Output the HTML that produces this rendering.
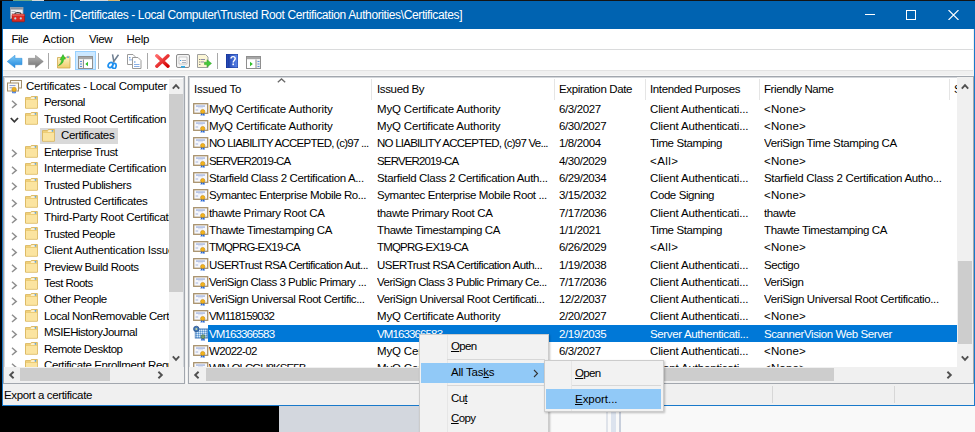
<!DOCTYPE html>
<html><head><meta charset="utf-8">
<style>
*{margin:0;padding:0;box-sizing:border-box}
html,body{width:975px;height:432px;overflow:hidden;background:#000}
body{position:relative;font-family:"Liberation Sans",sans-serif;font-size:11.5px;letter-spacing:-0.3px;color:#000}
.a{position:absolute}
.t{position:absolute;white-space:nowrap;line-height:14px}
.ic{position:absolute;display:block}
.pane{position:absolute;background:#fff;border:1px solid #a2a7ae;box-shadow:inset 0 0 0 1px #d3d6da;overflow:hidden}
.sb{position:absolute;background:#f0f0f0}
.th{position:absolute;background:#cdcdcd}
.arr{position:absolute;width:17px;height:17px}
.u{text-decoration:underline;text-underline-offset:1px}
</style></head><body>

<div class="a" style="left:0;top:0;width:975px;height:1px;background:#141414"></div>
<div class="a" style="left:13px;top:0;width:19px;height:1px;background:#6aa88a"></div>
<div class="a" style="left:32px;top:0;width:12px;height:1px;background:#d8d8d8"></div>
<div class="a" style="left:80px;top:0;width:28px;height:1px;background:#d8d8d8"></div>
<div class="a" style="left:108px;top:0;width:12px;height:1px;background:#d6b36a"></div>
<div class="a" style="left:279px;top:405px;width:140px;height:27px;background:#d3d7de"></div>
<div class="a" style="left:419px;top:405px;width:556px;height:27px;background:#f9f9f9"></div>
<div class="a" style="left:606px;top:405px;width:2px;height:27px;background:#dfe3ea"></div>
<div class="a" style="left:611px;top:405px;width:5px;height:27px;background:#dce3ee"></div>
<div class="a" style="left:619px;top:405px;width:2px;height:27px;background:#c8cfdc"></div>
<div class="a" style="left:2px;top:1px;width:973px;height:405px;background:#f0f0f0;border:1px solid #1979ca;border-top:0"></div>
<div class="a" style="left:2px;top:1px;width:973px;height:28px;background:#0063b1"></div>
<div class="a" style="left:3px;top:29px;width:970px;height:20px;background:#fff"></div>
<div class="a" style="left:3px;top:49px;width:970px;height:1px;background:#dadbdc"></div>
<div class="a" style="left:3px;top:50px;width:970px;height:20px;background:#fff"></div>
<div class="a" style="left:3px;top:70px;width:970px;height:1px;background:#e3e3e3"></div>
<div class="a" style="left:3px;top:75px;width:970px;height:1px;background:#f9f9f9"></div>
<div class="a" style="left:186px;top:75px;width:1px;height:309px;background:#f9f9f9"></div>
<svg class="ic" style="left:10px;top:7px" width="16" height="16" viewBox="0 0 16 16"><rect x="0.5" y="0.5" width="12.5" height="11" fill="#eef0f3" stroke="#9aa0a8" stroke-width="0.8"/><rect x="0.8" y="0.8" width="12" height="1.8" fill="#8c939c"/><rect x="1.5" y="4" width="4" height="0.8" fill="#9aa3ad"/><rect x="1.5" y="6" width="2" height="0.8" fill="#b0b8c0"/><path d="M4.8 7.3c0-2.2 6.2-2.2 6.2 0" fill="none" stroke="#3a3a3a" stroke-width="1.1"/><rect x="2" y="7.2" width="12.6" height="7.6" rx="0.8" fill="#d92a22" stroke="#a0140e" stroke-width="0.6"/><rect x="2.3" y="7.5" width="12" height="1.2" fill="#ee6a60"/><circle cx="5.3" cy="11.4" r="1.1" fill="#bcd8e0"/><circle cx="10.8" cy="11.4" r="1.1" fill="#bcd8e0"/></svg>
<div class="t" style="left:30px;top:8px;color:#fff;font-size:12px;letter-spacing:-0.38px">certlm - [Certificates - Local Computer\Trusted Root Certification Authorities\Certificates]</div>
<div class="a" style="left:865px;top:14px;width:10px;height:1px;background:#fff"></div>
<div class="a" style="left:906px;top:10px;width:10px;height:10px;border:1px solid #fff"></div>
<svg class="ic" style="left:948px;top:10px" width="11" height="10" viewBox="0 0 11 10"><path d="M0.5 0L10.5 10M10.5 0L0.5 10" stroke="#fff" stroke-width="1.1"/></svg>
<div class="t" style="left:11.5px;top:32px;letter-spacing:-0.483px">File</div>
<div class="t" style="left:42.8px;top:32px;letter-spacing:-0.078px">Action</div>
<div class="t" style="left:89px;top:32px;letter-spacing:-0.380px">View</div>
<div class="t" style="left:126.5px;top:32px;letter-spacing:-0.214px">Help</div>
<svg class="ic" style="left:0;top:0;width:0;height:0"><defs><linearGradient id="gb" x1="0" y1="0" x2="0" y2="1"><stop offset="0" stop-color="#7dcaf7"/><stop offset="1" stop-color="#1f86dc"/></linearGradient><linearGradient id="gg" x1="0" y1="0" x2="0" y2="1"><stop offset="0" stop-color="#b9b9b9"/><stop offset="1" stop-color="#6f6f6f"/></linearGradient><linearGradient id="gf" x1="0" y1="0" x2="0" y2="1"><stop offset="0" stop-color="#fdf0c0"/><stop offset="1" stop-color="#f0cd6a"/></linearGradient><linearGradient id="gr" x1="0" y1="0" x2="1" y2="1"><stop offset="0" stop-color="#ff6a6a"/><stop offset="1" stop-color="#d40000"/></linearGradient><linearGradient id="gh" x1="0" y1="0" x2="1" y2="0"><stop offset="0" stop-color="#1c3fae"/><stop offset="1" stop-color="#5b86ea"/></linearGradient></defs></svg>
<svg class="ic" style="left:7px;top:55px" width="16" height="14" viewBox="0 0 16 14"><path d="M0.2 6.5L8 0.2V3.3H15V9.7H8V12.8z" fill="url(#gb)" stroke="#2a8ad8" stroke-width="0.5"/></svg>
<svg class="ic" style="left:28px;top:55px" width="16" height="14" viewBox="0 0 16 14"><path d="M15.3 6.5L7.5 0.2V3.3H0.5V9.7H7.5V12.8z" fill="url(#gg)" stroke="#7a7a7a" stroke-width="0.5"/></svg>
<div class="a" style="left:48px;top:53px;width:1px;height:16px;background:#a8a8a8"></div>
<svg class="ic" style="left:57px;top:54px" width="14" height="15" viewBox="0 0 14 15"><path d="M0.5 3.5h12.5v10.5h-12.5z" rx="1" fill="url(#gf)" stroke="#cfa84e" stroke-width="0.8"/><path d="M9 3.5l1-1.2h2.5l0.5 1.2" fill="#fff6d8" stroke="#cfa84e" stroke-width="0.6"/><circle cx="11" cy="3.2" r="0.9" fill="#5aa6e6"/><path d="M1.5 11.5C3.5 10 4.5 8 4.8 5.5L3 5.8 6 0.6 8.5 5 6.6 5.2C6.4 8.3 5 10.5 1.5 11.5z" fill="#3fcf2f" stroke="#1f9a1a" stroke-width="0.5"/></svg>
<div class="a" style="left:75px;top:51px;width:21px;height:19px;background:#cce8ff;border:1px solid #99d1ff"></div>
<svg class="ic" style="left:78px;top:56px" width="15" height="13" viewBox="0 0 15 13"><rect x="0.5" y="0.5" width="14" height="12" fill="#ececec" stroke="#8f8f8f"/><rect x="1" y="1" width="13" height="2" fill="#a6a6a6"/><rect x="6" y="4" width="8" height="8" fill="#fff"/><rect x="5" y="3.5" width="1" height="9" fill="#8f8f8f"/><path d="M10 5.8v4.4L7.3 8z" fill="#2fbf2a"/><rect x="2" y="5" width="2" height="1" fill="#5b8ed8"/><rect x="2" y="7.5" width="2" height="1" fill="#5b8ed8"/><rect x="2" y="10" width="2" height="1" fill="#5b8ed8"/></svg>
<div class="a" style="left:98px;top:53px;width:1px;height:16px;background:#a8a8a8"></div>
<svg class="ic" style="left:107px;top:54px" width="13" height="15" viewBox="0 0 13 15"><path d="M5.5 0.3L7 8.5M11.5 0.8L6 8.5" stroke="#6e7e90" stroke-width="1.5"/><ellipse cx="3.5" cy="11" rx="2" ry="2.8" transform="rotate(35 3.5 11)" fill="none" stroke="#1e90f0" stroke-width="1.7"/><ellipse cx="7.3" cy="12" rx="1.8" ry="2.6" transform="rotate(10 7.3 12)" fill="none" stroke="#1e90f0" stroke-width="1.7"/></svg>
<svg class="ic" style="left:127px;top:54px" width="15" height="15" viewBox="0 0 15 15"><path d="M0.5 0.5h5.5l2 2v8h-7.5z" fill="#fff" stroke="#9a9a9a"/><path d="M5.5 3.5h5.5l3 3v8h-8.5z" fill="#fff" stroke="#9a9a9a"/><rect x="2" y="3.2" width="1.5" height="1" fill="#4a86d8"/><rect x="2" y="5.5" width="3" height="0.8" fill="#6a9ae0"/><rect x="7" y="7.5" width="1.5" height="1" fill="#4a86d8"/><rect x="7" y="10" width="5.5" height="0.8" fill="#6a9ae0"/><rect x="7" y="12" width="5.5" height="0.8" fill="#6a9ae0"/></svg>
<div class="a" style="left:147px;top:53px;width:1px;height:16px;background:#a8a8a8"></div>
<svg class="ic" style="left:155px;top:54px" width="15" height="14" viewBox="0 0 15 14"><path d="M1.8 1.8L13 12.2M13 1.8L1.8 12.2" stroke="url(#gr)" stroke-width="3.4" stroke-linecap="round"/></svg>
<svg class="ic" style="left:176px;top:54px" width="14" height="14" viewBox="0 0 14 14"><rect x="0.5" y="0.5" width="13" height="13" rx="1.5" fill="#f3f3f3" stroke="#8c8c8c"/><path d="M3 3h8v7h-8z" fill="#fafafa" stroke="#b0b0b0" stroke-width="0.6"/><rect x="4" y="6" width="1.2" height="1" fill="#3aa0e8"/><rect x="6" y="6" width="4" height="0.8" fill="#9aa0b0"/><rect x="6" y="8" width="4" height="0.8" fill="#9aa0b0"/><rect x="5" y="12" width="4" height="1.6" fill="#2aaae8"/></svg>
<svg class="ic" style="left:197px;top:54px" width="15" height="14" viewBox="0 0 15 14"><path d="M0.5 0.5h8l2.5 2.5v10.5h-10.5z" fill="#fcf6d6" stroke="#a0a0a0"/><rect x="2.3" y="5" width="1" height="1" fill="#555"/><rect x="4" y="5" width="4" height="0.9" fill="#8080a0"/><rect x="2.3" y="7.5" width="1" height="1" fill="#555"/><rect x="4" y="7.5" width="3" height="0.9" fill="#8080a0"/><rect x="2.3" y="10" width="1" height="1" fill="#555"/><path d="M7.5 8.2h2.5v-2.5l4.5 3.7-4.5 3.7v-2.5h-2.5z" fill="#45c83a" stroke="#2a9a22" stroke-width="0.5"/></svg>
<div class="a" style="left:217px;top:53px;width:1px;height:16px;background:#a8a8a8"></div>
<svg class="ic" style="left:226px;top:54px" width="12" height="14" viewBox="0 0 12 14"><rect x="0" y="0" width="12" height="14" fill="url(#gh)"/><rect x="0" y="0" width="12" height="14" fill="none" stroke="#132e8a" stroke-width="0.8"/><rect x="2.5" y="0.5" width="0.8" height="13" fill="#1a3490"/><path d="M5 4.6c0-2.6 4.2-2.6 4.2 0 0 1.8-2 1.8-2 3.8" fill="none" stroke="#fff" stroke-width="1.4"/><rect x="6.4" y="9.5" width="1.6" height="1.7" fill="#fff"/></svg>
<svg class="ic" style="left:246px;top:56px" width="15" height="13" viewBox="0 0 15 13"><rect x="0.5" y="0.5" width="14" height="12" fill="#ececec" stroke="#8f8f8f"/><rect x="1" y="1" width="13" height="2" fill="#a6a6a6"/><rect x="1" y="4" width="8.5" height="8" fill="#fff"/><rect x="9.5" y="3.5" width="1" height="9" fill="#8f8f8f"/><path d="M4 5.8v4.4L6.8 8z" fill="#2fbf2a"/><rect x="11.5" y="5" width="2" height="1" fill="#5b8ed8"/><rect x="11.5" y="7.5" width="2" height="1" fill="#5b8ed8"/><rect x="11.5" y="10" width="2" height="1" fill="#5b8ed8"/></svg>
<div class="pane" style="left:3px;top:76px;width:182px;height:308px">
<div class="a" style="left:3px;top:3px"><svg class="ic" width="16" height="15" viewBox="0 0 16 15"><rect x="3.5" y="0.5" width="11" height="7.5" fill="#fbfaf6" stroke="#a38f6d"/><rect x="0.5" y="3" width="11" height="8" fill="#fbfaf6" stroke="#a38f6d"/><rect x="2.5" y="5" width="6" height="1" fill="#8ea3d6"/><rect x="2.5" y="7" width="3" height="1.3" fill="#a9b6dc"/><path d="M5.5 10.5l-0.5 3 1.2-0.8 0.8 1.2 0.4-3.2z M8.5 10.5l0.5 3-1.2-0.8-0.8 1.2-0.4-3.2z" fill="#2f6fe0"/><circle cx="7.1" cy="9.4" r="2.2" fill="#eab11e" stroke="#c98a10" stroke-width="0.6"/></svg></div>
<div class="t" style="left:22px;top:2px;letter-spacing:-0.270px">Certificates - Local Computer</div>
<svg class="ic" style="left:7.30px;top:23.20px" width="7" height="9" viewBox="0 0 7 9"><path d="M1 0.8L5.2 4.4 1 8" fill="none" stroke="#8f8f8f" stroke-width="1.5"/></svg>
<div class="a" style="left:21.30px;top:19.00px"><svg class="ic" width="13" height="13" viewBox="0 0 13 13"><path d="M0.5 1.6H5.3L6.3 0.5H12.4V12.2H0.5Z" fill="#f3d47c" stroke="#d9b55c" stroke-width="0.9"/><path d="M6.6 1.2h3.6v1.5h-4.6z" fill="#fff8e6"/><circle cx="10.4" cy="1.8" r="0.9" fill="#5ba3dc"/><rect x="1" y="3.2" width="11" height="8.6" fill="#fbe4a0"/><rect x="1" y="3" width="11" height="0.7" fill="#e8c468"/></svg></div>
<div class="t" style="left:40px;top:18.42px;width:125px;overflow:hidden;letter-spacing:-0.574px">Personal</div>
<svg class="ic" style="left:5.60px;top:39.82px" width="9" height="7" viewBox="0 0 9 7"><path d="M0.8 1L4.4 4.8 8 1" fill="none" stroke="#383838" stroke-width="1.8"/></svg>
<div class="a" style="left:21.30px;top:35.42px"><svg class="ic" width="13" height="13" viewBox="0 0 13 13"><path d="M0.5 1.6H5.3L6.3 0.5H12.4V12.2H0.5Z" fill="#f3d47c" stroke="#d9b55c" stroke-width="0.9"/><path d="M6.6 1.2h3.6v1.5h-4.6z" fill="#fff8e6"/><circle cx="10.4" cy="1.8" r="0.9" fill="#5ba3dc"/><rect x="1" y="3.2" width="11" height="8.6" fill="#fbe4a0"/><rect x="1" y="3" width="11" height="0.7" fill="#e8c468"/></svg></div>
<div class="t" style="left:40px;top:34.84px;width:125px;overflow:hidden;letter-spacing:-0.299px">Trusted Root Certification</div>
<div class="a" style="left:36px;top:50.50px;width:78px;height:16.4px;background:#d9d9d9"></div>
<div class="a" style="left:37.70px;top:51.84px"><svg class="ic" width="13" height="13" viewBox="0 0 13 13"><path d="M0.5 1.6H5.3L6.3 0.5H12.4V12.2H0.5Z" fill="#f3d47c" stroke="#d9b55c" stroke-width="0.9"/><path d="M6.6 1.2h3.6v1.5h-4.6z" fill="#fff8e6"/><circle cx="10.4" cy="1.8" r="0.9" fill="#5ba3dc"/><rect x="1" y="3.2" width="11" height="8.6" fill="#fbe4a0"/><rect x="1" y="3" width="11" height="0.7" fill="#e8c468"/></svg></div>
<div class="t" style="left:57px;top:51.26px;width:108px;overflow:hidden;letter-spacing:-0.353px">Certificates</div>
<svg class="ic" style="left:7.30px;top:72.46px" width="7" height="9" viewBox="0 0 7 9"><path d="M1 0.8L5.2 4.4 1 8" fill="none" stroke="#8f8f8f" stroke-width="1.5"/></svg>
<div class="a" style="left:21.30px;top:68.26px"><svg class="ic" width="13" height="13" viewBox="0 0 13 13"><path d="M0.5 1.6H5.3L6.3 0.5H12.4V12.2H0.5Z" fill="#f3d47c" stroke="#d9b55c" stroke-width="0.9"/><path d="M6.6 1.2h3.6v1.5h-4.6z" fill="#fff8e6"/><circle cx="10.4" cy="1.8" r="0.9" fill="#5ba3dc"/><rect x="1" y="3.2" width="11" height="8.6" fill="#fbe4a0"/><rect x="1" y="3" width="11" height="0.7" fill="#e8c468"/></svg></div>
<div class="t" style="left:40px;top:67.68px;width:125px;overflow:hidden;letter-spacing:-0.479px">Enterprise Trust</div>
<svg class="ic" style="left:7.30px;top:88.88px" width="7" height="9" viewBox="0 0 7 9"><path d="M1 0.8L5.2 4.4 1 8" fill="none" stroke="#8f8f8f" stroke-width="1.5"/></svg>
<div class="a" style="left:21.30px;top:84.68px"><svg class="ic" width="13" height="13" viewBox="0 0 13 13"><path d="M0.5 1.6H5.3L6.3 0.5H12.4V12.2H0.5Z" fill="#f3d47c" stroke="#d9b55c" stroke-width="0.9"/><path d="M6.6 1.2h3.6v1.5h-4.6z" fill="#fff8e6"/><circle cx="10.4" cy="1.8" r="0.9" fill="#5ba3dc"/><rect x="1" y="3.2" width="11" height="8.6" fill="#fbe4a0"/><rect x="1" y="3" width="11" height="0.7" fill="#e8c468"/></svg></div>
<div class="t" style="left:40px;top:84.10px;width:125px;overflow:hidden;letter-spacing:-0.217px">Intermediate Certification</div>
<svg class="ic" style="left:7.30px;top:105.30px" width="7" height="9" viewBox="0 0 7 9"><path d="M1 0.8L5.2 4.4 1 8" fill="none" stroke="#8f8f8f" stroke-width="1.5"/></svg>
<div class="a" style="left:21.30px;top:101.10px"><svg class="ic" width="13" height="13" viewBox="0 0 13 13"><path d="M0.5 1.6H5.3L6.3 0.5H12.4V12.2H0.5Z" fill="#f3d47c" stroke="#d9b55c" stroke-width="0.9"/><path d="M6.6 1.2h3.6v1.5h-4.6z" fill="#fff8e6"/><circle cx="10.4" cy="1.8" r="0.9" fill="#5ba3dc"/><rect x="1" y="3.2" width="11" height="8.6" fill="#fbe4a0"/><rect x="1" y="3" width="11" height="0.7" fill="#e8c468"/></svg></div>
<div class="t" style="left:40px;top:100.52px;width:125px;overflow:hidden;letter-spacing:-0.459px">Trusted Publishers</div>
<svg class="ic" style="left:7.30px;top:121.72px" width="7" height="9" viewBox="0 0 7 9"><path d="M1 0.8L5.2 4.4 1 8" fill="none" stroke="#8f8f8f" stroke-width="1.5"/></svg>
<div class="a" style="left:21.30px;top:117.52px"><svg class="ic" width="13" height="13" viewBox="0 0 13 13"><path d="M0.5 1.6H5.3L6.3 0.5H12.4V12.2H0.5Z" fill="#f3d47c" stroke="#d9b55c" stroke-width="0.9"/><path d="M6.6 1.2h3.6v1.5h-4.6z" fill="#fff8e6"/><circle cx="10.4" cy="1.8" r="0.9" fill="#5ba3dc"/><rect x="1" y="3.2" width="11" height="8.6" fill="#fbe4a0"/><rect x="1" y="3" width="11" height="0.7" fill="#e8c468"/></svg></div>
<div class="t" style="left:40px;top:116.94px;width:125px;overflow:hidden;letter-spacing:-0.326px">Untrusted Certificates</div>
<svg class="ic" style="left:7.30px;top:138.14px" width="7" height="9" viewBox="0 0 7 9"><path d="M1 0.8L5.2 4.4 1 8" fill="none" stroke="#8f8f8f" stroke-width="1.5"/></svg>
<div class="a" style="left:21.30px;top:133.94px"><svg class="ic" width="13" height="13" viewBox="0 0 13 13"><path d="M0.5 1.6H5.3L6.3 0.5H12.4V12.2H0.5Z" fill="#f3d47c" stroke="#d9b55c" stroke-width="0.9"/><path d="M6.6 1.2h3.6v1.5h-4.6z" fill="#fff8e6"/><circle cx="10.4" cy="1.8" r="0.9" fill="#5ba3dc"/><rect x="1" y="3.2" width="11" height="8.6" fill="#fbe4a0"/><rect x="1" y="3" width="11" height="0.7" fill="#e8c468"/></svg></div>
<div class="t" style="left:40px;top:133.36px;width:125px;overflow:hidden;letter-spacing:-0.312px">Third-Party Root Certification Authorities</div>
<svg class="ic" style="left:7.30px;top:154.56px" width="7" height="9" viewBox="0 0 7 9"><path d="M1 0.8L5.2 4.4 1 8" fill="none" stroke="#8f8f8f" stroke-width="1.5"/></svg>
<div class="a" style="left:21.30px;top:150.36px"><svg class="ic" width="13" height="13" viewBox="0 0 13 13"><path d="M0.5 1.6H5.3L6.3 0.5H12.4V12.2H0.5Z" fill="#f3d47c" stroke="#d9b55c" stroke-width="0.9"/><path d="M6.6 1.2h3.6v1.5h-4.6z" fill="#fff8e6"/><circle cx="10.4" cy="1.8" r="0.9" fill="#5ba3dc"/><rect x="1" y="3.2" width="11" height="8.6" fill="#fbe4a0"/><rect x="1" y="3" width="11" height="0.7" fill="#e8c468"/></svg></div>
<div class="t" style="left:40px;top:149.78px;width:125px;overflow:hidden;letter-spacing:-0.470px">Trusted People</div>
<svg class="ic" style="left:7.30px;top:170.98px" width="7" height="9" viewBox="0 0 7 9"><path d="M1 0.8L5.2 4.4 1 8" fill="none" stroke="#8f8f8f" stroke-width="1.5"/></svg>
<div class="a" style="left:21.30px;top:166.78px"><svg class="ic" width="13" height="13" viewBox="0 0 13 13"><path d="M0.5 1.6H5.3L6.3 0.5H12.4V12.2H0.5Z" fill="#f3d47c" stroke="#d9b55c" stroke-width="0.9"/><path d="M6.6 1.2h3.6v1.5h-4.6z" fill="#fff8e6"/><circle cx="10.4" cy="1.8" r="0.9" fill="#5ba3dc"/><rect x="1" y="3.2" width="11" height="8.6" fill="#fbe4a0"/><rect x="1" y="3" width="11" height="0.7" fill="#e8c468"/></svg></div>
<div class="t" style="left:40px;top:166.20px;width:125px;overflow:hidden;letter-spacing:-0.198px">Client Authentication Issuers</div>
<svg class="ic" style="left:7.30px;top:187.40px" width="7" height="9" viewBox="0 0 7 9"><path d="M1 0.8L5.2 4.4 1 8" fill="none" stroke="#8f8f8f" stroke-width="1.5"/></svg>
<div class="a" style="left:21.30px;top:183.20px"><svg class="ic" width="13" height="13" viewBox="0 0 13 13"><path d="M0.5 1.6H5.3L6.3 0.5H12.4V12.2H0.5Z" fill="#f3d47c" stroke="#d9b55c" stroke-width="0.9"/><path d="M6.6 1.2h3.6v1.5h-4.6z" fill="#fff8e6"/><circle cx="10.4" cy="1.8" r="0.9" fill="#5ba3dc"/><rect x="1" y="3.2" width="11" height="8.6" fill="#fbe4a0"/><rect x="1" y="3" width="11" height="0.7" fill="#e8c468"/></svg></div>
<div class="t" style="left:40px;top:182.62px;width:125px;overflow:hidden;letter-spacing:-0.437px">Preview Build Roots</div>
<svg class="ic" style="left:7.30px;top:203.82px" width="7" height="9" viewBox="0 0 7 9"><path d="M1 0.8L5.2 4.4 1 8" fill="none" stroke="#8f8f8f" stroke-width="1.5"/></svg>
<div class="a" style="left:21.30px;top:199.62px"><svg class="ic" width="13" height="13" viewBox="0 0 13 13"><path d="M0.5 1.6H5.3L6.3 0.5H12.4V12.2H0.5Z" fill="#f3d47c" stroke="#d9b55c" stroke-width="0.9"/><path d="M6.6 1.2h3.6v1.5h-4.6z" fill="#fff8e6"/><circle cx="10.4" cy="1.8" r="0.9" fill="#5ba3dc"/><rect x="1" y="3.2" width="11" height="8.6" fill="#fbe4a0"/><rect x="1" y="3" width="11" height="0.7" fill="#e8c468"/></svg></div>
<div class="t" style="left:40px;top:199.04px;width:125px;overflow:hidden;letter-spacing:-0.573px">Test Roots</div>
<svg class="ic" style="left:7.30px;top:220.24px" width="7" height="9" viewBox="0 0 7 9"><path d="M1 0.8L5.2 4.4 1 8" fill="none" stroke="#8f8f8f" stroke-width="1.5"/></svg>
<div class="a" style="left:21.30px;top:216.04px"><svg class="ic" width="13" height="13" viewBox="0 0 13 13"><path d="M0.5 1.6H5.3L6.3 0.5H12.4V12.2H0.5Z" fill="#f3d47c" stroke="#d9b55c" stroke-width="0.9"/><path d="M6.6 1.2h3.6v1.5h-4.6z" fill="#fff8e6"/><circle cx="10.4" cy="1.8" r="0.9" fill="#5ba3dc"/><rect x="1" y="3.2" width="11" height="8.6" fill="#fbe4a0"/><rect x="1" y="3" width="11" height="0.7" fill="#e8c468"/></svg></div>
<div class="t" style="left:40px;top:215.46px;width:125px;overflow:hidden;letter-spacing:-0.414px">Other People</div>
<svg class="ic" style="left:7.30px;top:236.66px" width="7" height="9" viewBox="0 0 7 9"><path d="M1 0.8L5.2 4.4 1 8" fill="none" stroke="#8f8f8f" stroke-width="1.5"/></svg>
<div class="a" style="left:21.30px;top:232.46px"><svg class="ic" width="13" height="13" viewBox="0 0 13 13"><path d="M0.5 1.6H5.3L6.3 0.5H12.4V12.2H0.5Z" fill="#f3d47c" stroke="#d9b55c" stroke-width="0.9"/><path d="M6.6 1.2h3.6v1.5h-4.6z" fill="#fff8e6"/><circle cx="10.4" cy="1.8" r="0.9" fill="#5ba3dc"/><rect x="1" y="3.2" width="11" height="8.6" fill="#fbe4a0"/><rect x="1" y="3" width="11" height="0.7" fill="#e8c468"/></svg></div>
<div class="t" style="left:40px;top:231.88px;width:125px;overflow:hidden;letter-spacing:-0.429px">Local NonRemovable Certificates</div>
<svg class="ic" style="left:7.30px;top:253.08px" width="7" height="9" viewBox="0 0 7 9"><path d="M1 0.8L5.2 4.4 1 8" fill="none" stroke="#8f8f8f" stroke-width="1.5"/></svg>
<div class="a" style="left:21.30px;top:248.88px"><svg class="ic" width="13" height="13" viewBox="0 0 13 13"><path d="M0.5 1.6H5.3L6.3 0.5H12.4V12.2H0.5Z" fill="#f3d47c" stroke="#d9b55c" stroke-width="0.9"/><path d="M6.6 1.2h3.6v1.5h-4.6z" fill="#fff8e6"/><circle cx="10.4" cy="1.8" r="0.9" fill="#5ba3dc"/><rect x="1" y="3.2" width="11" height="8.6" fill="#fbe4a0"/><rect x="1" y="3" width="11" height="0.7" fill="#e8c468"/></svg></div>
<div class="t" style="left:40px;top:248.30px;width:125px;overflow:hidden;letter-spacing:-0.479px">MSIEHistoryJournal</div>
<svg class="ic" style="left:7.30px;top:269.50px" width="7" height="9" viewBox="0 0 7 9"><path d="M1 0.8L5.2 4.4 1 8" fill="none" stroke="#8f8f8f" stroke-width="1.5"/></svg>
<div class="a" style="left:21.30px;top:265.30px"><svg class="ic" width="13" height="13" viewBox="0 0 13 13"><path d="M0.5 1.6H5.3L6.3 0.5H12.4V12.2H0.5Z" fill="#f3d47c" stroke="#d9b55c" stroke-width="0.9"/><path d="M6.6 1.2h3.6v1.5h-4.6z" fill="#fff8e6"/><circle cx="10.4" cy="1.8" r="0.9" fill="#5ba3dc"/><rect x="1" y="3.2" width="11" height="8.6" fill="#fbe4a0"/><rect x="1" y="3" width="11" height="0.7" fill="#e8c468"/></svg></div>
<div class="t" style="left:40px;top:264.72px;width:125px;overflow:hidden;letter-spacing:-0.518px">Remote Desktop</div>
<svg class="ic" style="left:7.30px;top:285.92px" width="7" height="9" viewBox="0 0 7 9"><path d="M1 0.8L5.2 4.4 1 8" fill="none" stroke="#8f8f8f" stroke-width="1.5"/></svg>
<div class="a" style="left:21.30px;top:281.72px"><svg class="ic" width="13" height="13" viewBox="0 0 13 13"><path d="M0.5 1.6H5.3L6.3 0.5H12.4V12.2H0.5Z" fill="#f3d47c" stroke="#d9b55c" stroke-width="0.9"/><path d="M6.6 1.2h3.6v1.5h-4.6z" fill="#fff8e6"/><circle cx="10.4" cy="1.8" r="0.9" fill="#5ba3dc"/><rect x="1" y="3.2" width="11" height="8.6" fill="#fbe4a0"/><rect x="1" y="3" width="11" height="0.7" fill="#e8c468"/></svg></div>
<div class="t" style="left:40px;top:281.14px;width:125px;overflow:hidden;letter-spacing:-0.394px">Certificate Enrollment Requests</div>
<div class="sb" style="left:165px;top:2px;width:14px;height:288px"></div>
<div class="th" style="left:165px;top:17px;width:14px;height:198px"></div>
<svg class="ic" style="left:168px;top:6px" width="8" height="7" viewBox="0 0 8 7"><path d="M0.8 5.6L4 2.2 7.2 5.6" fill="none" stroke="#505050" stroke-width="1.9"/></svg>
<svg class="ic" style="left:168px;top:278px" width="8" height="7" viewBox="0 0 8 7"><path d="M0.8 1.4L4 4.8 7.2 1.4" fill="none" stroke="#505050" stroke-width="1.9"/></svg>
<div class="sb" style="left:0px;top:290px;width:180px;height:16px"></div>
<div class="th" style="left:16px;top:290.5px;width:90px;height:13px"></div>
<svg class="ic" style="left:4px;top:294px" width="7" height="8" viewBox="0 0 7 8"><path d="M5.6 0.8L2.2 4 5.6 7.2" fill="none" stroke="#505050" stroke-width="1.9"/></svg>
<svg class="ic" style="left:153px;top:294px" width="7" height="8" viewBox="0 0 7 8"><path d="M1.4 0.8L4.8 4 1.4 7.2" fill="none" stroke="#505050" stroke-width="1.9"/></svg>
</div>
<div class="pane" style="left:188px;top:76px;width:786px;height:308px">
<div class="a" style="left:182px;top:2px;width:1px;height:21px;background:#e5e5e5"></div>
<div class="a" style="left:365px;top:2px;width:1px;height:21px;background:#e5e5e5"></div>
<div class="a" style="left:456px;top:2px;width:1px;height:21px;background:#e5e5e5"></div>
<div class="a" style="left:570px;top:2px;width:1px;height:21px;background:#e5e5e5"></div>
<div class="a" style="left:760px;top:2px;width:1px;height:21px;background:#e5e5e5"></div>
<div class="t" style="left:5px;top:5px;letter-spacing:-0.195px">Issued To</div>
<div class="t" style="left:188px;top:5px;letter-spacing:-0.365px">Issued By</div>
<div class="t" style="left:370px;top:5px;letter-spacing:-0.372px">Expiration Date</div>
<div class="t" style="left:461px;top:5px;letter-spacing:-0.377px">Intended Purposes</div>
<div class="t" style="left:575px;top:5px;letter-spacing:-0.406px">Friendly Name</div>
<div class="t" style="left:765px;top:5px;letter-spacing:-1.103px">S</div>
<svg class="ic" style="left:88px;top:1px" width="9" height="5" viewBox="0 0 9 5"><path d="M0.8 4.3L4.5 0.9 8.2 4.3" fill="none" stroke="#6a6a6a" stroke-width="1.3"/></svg>
<div class="a" style="left:4px;top:25.70px"><svg class="ic" width="16" height="16" viewBox="0 0 16 16"><rect x="0.7" y="0.7" width="14" height="9.6" fill="#f6f7fb" stroke="#a8916b" stroke-width="1.3"/><rect x="3" y="2.6" width="9" height="0.9" fill="#7a93d0"/><rect x="5" y="4.5" width="5" height="0.6" fill="#c5cde6"/><rect x="2.6" y="6.4" width="2.6" height="1.2" fill="#b3c0e2"/><path d="M8.2 10l-0.7 2.8 1.2-0.6 0.6 0.9 0.4-3z M11.2 10l0.7 2.8-1.2-0.6-0.6 0.9-0.4-3z" fill="#2566d8"/><circle cx="9.7" cy="8.5" r="2.1" fill="#f2b31e" stroke="#c68a0c" stroke-width="0.6"/></svg></div>
<div class="t" style="letter-spacing:-0.143px;left:20px;top:24.80px;width:165px;overflow:hidden;color:#000">MyQ Certificate Authority</div>
<div class="t" style="letter-spacing:-0.155px;left:188px;top:24.80px;width:180px;overflow:hidden;color:#000">MyQ Certificate Authority</div>
<div class="t" style="letter-spacing:-0.389px;left:370px;top:24.80px;width:90px;overflow:hidden;color:#000">6/3/2027</div>
<div class="t" style="letter-spacing:-0.153px;left:461px;top:24.80px;width:110px;overflow:hidden;color:#000">Client Authenticati...</div>
<div class="t" style="letter-spacing:0.170px;left:575px;top:24.80px;width:190px;overflow:hidden;color:#000">&lt;None&gt;</div>
<div class="a" style="left:4px;top:43.00px"><svg class="ic" width="16" height="16" viewBox="0 0 16 16"><rect x="0.7" y="0.7" width="14" height="9.6" fill="#f6f7fb" stroke="#a8916b" stroke-width="1.3"/><rect x="3" y="2.6" width="9" height="0.9" fill="#7a93d0"/><rect x="5" y="4.5" width="5" height="0.6" fill="#c5cde6"/><rect x="2.6" y="6.4" width="2.6" height="1.2" fill="#b3c0e2"/><path d="M8.2 10l-0.7 2.8 1.2-0.6 0.6 0.9 0.4-3z M11.2 10l0.7 2.8-1.2-0.6-0.6 0.9-0.4-3z" fill="#2566d8"/><circle cx="9.7" cy="8.5" r="2.1" fill="#f2b31e" stroke="#c68a0c" stroke-width="0.6"/></svg></div>
<div class="t" style="letter-spacing:-0.143px;left:20px;top:42.10px;width:165px;overflow:hidden;color:#000">MyQ Certificate Authority</div>
<div class="t" style="letter-spacing:-0.155px;left:188px;top:42.10px;width:180px;overflow:hidden;color:#000">MyQ Certificate Authority</div>
<div class="t" style="letter-spacing:-0.436px;left:370px;top:42.10px;width:90px;overflow:hidden;color:#000">6/30/2027</div>
<div class="t" style="letter-spacing:-0.153px;left:461px;top:42.10px;width:110px;overflow:hidden;color:#000">Client Authenticati...</div>
<div class="t" style="letter-spacing:0.170px;left:575px;top:42.10px;width:190px;overflow:hidden;color:#000">&lt;None&gt;</div>
<div class="a" style="left:4px;top:60.30px"><svg class="ic" width="16" height="16" viewBox="0 0 16 16"><rect x="0.7" y="0.7" width="14" height="9.6" fill="#f6f7fb" stroke="#a8916b" stroke-width="1.3"/><rect x="3" y="2.6" width="9" height="0.9" fill="#7a93d0"/><rect x="5" y="4.5" width="5" height="0.6" fill="#c5cde6"/><rect x="2.6" y="6.4" width="2.6" height="1.2" fill="#b3c0e2"/><path d="M8.2 10l-0.7 2.8 1.2-0.6 0.6 0.9 0.4-3z M11.2 10l0.7 2.8-1.2-0.6-0.6 0.9-0.4-3z" fill="#2566d8"/><circle cx="9.7" cy="8.5" r="2.1" fill="#f2b31e" stroke="#c68a0c" stroke-width="0.6"/></svg></div>
<div class="t" style="letter-spacing:-0.744px;left:20px;top:59.40px;width:165px;overflow:hidden;color:#000">NO LIABILITY ACCEPTED, (c)97 ...</div>
<div class="t" style="letter-spacing:-0.761px;left:188px;top:59.40px;width:180px;overflow:hidden;color:#000">NO LIABILITY ACCEPTED, (c)97 Ve...</div>
<div class="t" style="letter-spacing:-0.389px;left:370px;top:59.40px;width:90px;overflow:hidden;color:#000">1/8/2004</div>
<div class="t" style="letter-spacing:-0.382px;left:461px;top:59.40px;width:110px;overflow:hidden;color:#000">Time Stamping</div>
<div class="t" style="letter-spacing:-0.361px;left:575px;top:59.40px;width:190px;overflow:hidden;color:#000">VeriSign Time Stamping CA</div>
<div class="a" style="left:4px;top:77.60px"><svg class="ic" width="16" height="16" viewBox="0 0 16 16"><rect x="0.7" y="0.7" width="14" height="9.6" fill="#f6f7fb" stroke="#a8916b" stroke-width="1.3"/><rect x="3" y="2.6" width="9" height="0.9" fill="#7a93d0"/><rect x="5" y="4.5" width="5" height="0.6" fill="#c5cde6"/><rect x="2.6" y="6.4" width="2.6" height="1.2" fill="#b3c0e2"/><path d="M8.2 10l-0.7 2.8 1.2-0.6 0.6 0.9 0.4-3z M11.2 10l0.7 2.8-1.2-0.6-0.6 0.9-0.4-3z" fill="#2566d8"/><circle cx="9.7" cy="8.5" r="2.1" fill="#f2b31e" stroke="#c68a0c" stroke-width="0.6"/></svg></div>
<div class="t" style="letter-spacing:-0.853px;left:20px;top:76.70px;width:165px;overflow:hidden;color:#000">SERVER2019-CA</div>
<div class="t" style="letter-spacing:-0.853px;left:188px;top:76.70px;width:180px;overflow:hidden;color:#000">SERVER2019-CA</div>
<div class="t" style="letter-spacing:-0.436px;left:370px;top:76.70px;width:90px;overflow:hidden;color:#000">4/30/2029</div>
<div class="t" style="letter-spacing:0.414px;left:461px;top:76.70px;width:110px;overflow:hidden;color:#000">&lt;All&gt;</div>
<div class="t" style="letter-spacing:0.170px;left:575px;top:76.70px;width:190px;overflow:hidden;color:#000">&lt;None&gt;</div>
<div class="a" style="left:4px;top:94.90px"><svg class="ic" width="16" height="16" viewBox="0 0 16 16"><rect x="0.7" y="0.7" width="14" height="9.6" fill="#f6f7fb" stroke="#a8916b" stroke-width="1.3"/><rect x="3" y="2.6" width="9" height="0.9" fill="#7a93d0"/><rect x="5" y="4.5" width="5" height="0.6" fill="#c5cde6"/><rect x="2.6" y="6.4" width="2.6" height="1.2" fill="#b3c0e2"/><path d="M8.2 10l-0.7 2.8 1.2-0.6 0.6 0.9 0.4-3z M11.2 10l0.7 2.8-1.2-0.6-0.6 0.9-0.4-3z" fill="#2566d8"/><circle cx="9.7" cy="8.5" r="2.1" fill="#f2b31e" stroke="#c68a0c" stroke-width="0.6"/></svg></div>
<div class="t" style="letter-spacing:-0.352px;left:20px;top:94.00px;width:165px;overflow:hidden;color:#000">Starfield Class 2 Certification A...</div>
<div class="t" style="letter-spacing:-0.326px;left:188px;top:94.00px;width:180px;overflow:hidden;color:#000">Starfield Class 2 Certification Auth...</div>
<div class="t" style="letter-spacing:-0.436px;left:370px;top:94.00px;width:90px;overflow:hidden;color:#000">6/29/2034</div>
<div class="t" style="letter-spacing:-0.153px;left:461px;top:94.00px;width:110px;overflow:hidden;color:#000">Client Authenticati...</div>
<div class="t" style="letter-spacing:-0.306px;left:575px;top:94.00px;width:190px;overflow:hidden;color:#000">Starfield Class 2 Certification Autho...</div>
<div class="a" style="left:4px;top:112.20px"><svg class="ic" width="16" height="16" viewBox="0 0 16 16"><rect x="0.7" y="0.7" width="14" height="9.6" fill="#f6f7fb" stroke="#a8916b" stroke-width="1.3"/><rect x="3" y="2.6" width="9" height="0.9" fill="#7a93d0"/><rect x="5" y="4.5" width="5" height="0.6" fill="#c5cde6"/><rect x="2.6" y="6.4" width="2.6" height="1.2" fill="#b3c0e2"/><path d="M8.2 10l-0.7 2.8 1.2-0.6 0.6 0.9 0.4-3z M11.2 10l0.7 2.8-1.2-0.6-0.6 0.9-0.4-3z" fill="#2566d8"/><circle cx="9.7" cy="8.5" r="2.1" fill="#f2b31e" stroke="#c68a0c" stroke-width="0.6"/></svg></div>
<div class="t" style="letter-spacing:-0.447px;left:20px;top:111.30px;width:165px;overflow:hidden;color:#000">Symantec Enterprise Mobile Ro...</div>
<div class="t" style="letter-spacing:-0.408px;left:188px;top:111.30px;width:180px;overflow:hidden;color:#000">Symantec Enterprise Mobile Root ...</div>
<div class="t" style="letter-spacing:-0.436px;left:370px;top:111.30px;width:90px;overflow:hidden;color:#000">3/15/2032</div>
<div class="t" style="letter-spacing:-0.412px;left:461px;top:111.30px;width:110px;overflow:hidden;color:#000">Code Signing</div>
<div class="t" style="letter-spacing:0.170px;left:575px;top:111.30px;width:190px;overflow:hidden;color:#000">&lt;None&gt;</div>
<div class="a" style="left:4px;top:129.50px"><svg class="ic" width="16" height="16" viewBox="0 0 16 16"><rect x="0.7" y="0.7" width="14" height="9.6" fill="#f6f7fb" stroke="#a8916b" stroke-width="1.3"/><rect x="3" y="2.6" width="9" height="0.9" fill="#7a93d0"/><rect x="5" y="4.5" width="5" height="0.6" fill="#c5cde6"/><rect x="2.6" y="6.4" width="2.6" height="1.2" fill="#b3c0e2"/><path d="M8.2 10l-0.7 2.8 1.2-0.6 0.6 0.9 0.4-3z M11.2 10l0.7 2.8-1.2-0.6-0.6 0.9-0.4-3z" fill="#2566d8"/><circle cx="9.7" cy="8.5" r="2.1" fill="#f2b31e" stroke="#c68a0c" stroke-width="0.6"/></svg></div>
<div class="t" style="letter-spacing:-0.359px;left:20px;top:128.60px;width:165px;overflow:hidden;color:#000">thawte Primary Root CA</div>
<div class="t" style="letter-spacing:-0.359px;left:188px;top:128.60px;width:180px;overflow:hidden;color:#000">thawte Primary Root CA</div>
<div class="t" style="letter-spacing:-0.436px;left:370px;top:128.60px;width:90px;overflow:hidden;color:#000">7/17/2036</div>
<div class="t" style="letter-spacing:-0.153px;left:461px;top:128.60px;width:110px;overflow:hidden;color:#000">Client Authenticati...</div>
<div class="t" style="letter-spacing:-0.385px;left:575px;top:128.60px;width:190px;overflow:hidden;color:#000">thawte</div>
<div class="a" style="left:4px;top:146.80px"><svg class="ic" width="16" height="16" viewBox="0 0 16 16"><rect x="0.7" y="0.7" width="14" height="9.6" fill="#f6f7fb" stroke="#a8916b" stroke-width="1.3"/><rect x="3" y="2.6" width="9" height="0.9" fill="#7a93d0"/><rect x="5" y="4.5" width="5" height="0.6" fill="#c5cde6"/><rect x="2.6" y="6.4" width="2.6" height="1.2" fill="#b3c0e2"/><path d="M8.2 10l-0.7 2.8 1.2-0.6 0.6 0.9 0.4-3z M11.2 10l0.7 2.8-1.2-0.6-0.6 0.9-0.4-3z" fill="#2566d8"/><circle cx="9.7" cy="8.5" r="2.1" fill="#f2b31e" stroke="#c68a0c" stroke-width="0.6"/></svg></div>
<div class="t" style="letter-spacing:-0.395px;left:20px;top:145.90px;width:165px;overflow:hidden;color:#000">Thawte Timestamping CA</div>
<div class="t" style="letter-spacing:-0.395px;left:188px;top:145.90px;width:180px;overflow:hidden;color:#000">Thawte Timestamping CA</div>
<div class="t" style="letter-spacing:-0.389px;left:370px;top:145.90px;width:90px;overflow:hidden;color:#000">1/1/2021</div>
<div class="t" style="letter-spacing:-0.382px;left:461px;top:145.90px;width:110px;overflow:hidden;color:#000">Time Stamping</div>
<div class="t" style="letter-spacing:-0.395px;left:575px;top:145.90px;width:190px;overflow:hidden;color:#000">Thawte Timestamping CA</div>
<div class="a" style="left:4px;top:164.10px"><svg class="ic" width="16" height="16" viewBox="0 0 16 16"><rect x="0.7" y="0.7" width="14" height="9.6" fill="#f6f7fb" stroke="#a8916b" stroke-width="1.3"/><rect x="3" y="2.6" width="9" height="0.9" fill="#7a93d0"/><rect x="5" y="4.5" width="5" height="0.6" fill="#c5cde6"/><rect x="2.6" y="6.4" width="2.6" height="1.2" fill="#b3c0e2"/><path d="M8.2 10l-0.7 2.8 1.2-0.6 0.6 0.9 0.4-3z M11.2 10l0.7 2.8-1.2-0.6-0.6 0.9-0.4-3z" fill="#2566d8"/><circle cx="9.7" cy="8.5" r="2.1" fill="#f2b31e" stroke="#c68a0c" stroke-width="0.6"/></svg></div>
<div class="t" style="letter-spacing:-0.811px;left:20px;top:163.20px;width:165px;overflow:hidden;color:#000">TMQPRG-EX19-CA</div>
<div class="t" style="letter-spacing:-0.811px;left:188px;top:163.20px;width:180px;overflow:hidden;color:#000">TMQPRG-EX19-CA</div>
<div class="t" style="letter-spacing:-0.436px;left:370px;top:163.20px;width:90px;overflow:hidden;color:#000">6/26/2029</div>
<div class="t" style="letter-spacing:0.414px;left:461px;top:163.20px;width:110px;overflow:hidden;color:#000">&lt;All&gt;</div>
<div class="t" style="letter-spacing:0.170px;left:575px;top:163.20px;width:190px;overflow:hidden;color:#000">&lt;None&gt;</div>
<div class="a" style="left:4px;top:181.40px"><svg class="ic" width="16" height="16" viewBox="0 0 16 16"><rect x="0.7" y="0.7" width="14" height="9.6" fill="#f6f7fb" stroke="#a8916b" stroke-width="1.3"/><rect x="3" y="2.6" width="9" height="0.9" fill="#7a93d0"/><rect x="5" y="4.5" width="5" height="0.6" fill="#c5cde6"/><rect x="2.6" y="6.4" width="2.6" height="1.2" fill="#b3c0e2"/><path d="M8.2 10l-0.7 2.8 1.2-0.6 0.6 0.9 0.4-3z M11.2 10l0.7 2.8-1.2-0.6-0.6 0.9-0.4-3z" fill="#2566d8"/><circle cx="9.7" cy="8.5" r="2.1" fill="#f2b31e" stroke="#c68a0c" stroke-width="0.6"/></svg></div>
<div class="t" style="letter-spacing:-0.531px;left:20px;top:180.50px;width:165px;overflow:hidden;color:#000">USERTrust RSA Certification Aut...</div>
<div class="t" style="letter-spacing:-0.524px;left:188px;top:180.50px;width:180px;overflow:hidden;color:#000">USERTrust RSA Certification Auth...</div>
<div class="t" style="letter-spacing:-0.436px;left:370px;top:180.50px;width:90px;overflow:hidden;color:#000">1/19/2038</div>
<div class="t" style="letter-spacing:-0.153px;left:461px;top:180.50px;width:110px;overflow:hidden;color:#000">Client Authenticati...</div>
<div class="t" style="letter-spacing:-0.455px;left:575px;top:180.50px;width:190px;overflow:hidden;color:#000">Sectigo</div>
<div class="a" style="left:4px;top:198.70px"><svg class="ic" width="16" height="16" viewBox="0 0 16 16"><rect x="0.7" y="0.7" width="14" height="9.6" fill="#f6f7fb" stroke="#a8916b" stroke-width="1.3"/><rect x="3" y="2.6" width="9" height="0.9" fill="#7a93d0"/><rect x="5" y="4.5" width="5" height="0.6" fill="#c5cde6"/><rect x="2.6" y="6.4" width="2.6" height="1.2" fill="#b3c0e2"/><path d="M8.2 10l-0.7 2.8 1.2-0.6 0.6 0.9 0.4-3z M11.2 10l0.7 2.8-1.2-0.6-0.6 0.9-0.4-3z" fill="#2566d8"/><circle cx="9.7" cy="8.5" r="2.1" fill="#f2b31e" stroke="#c68a0c" stroke-width="0.6"/></svg></div>
<div class="t" style="letter-spacing:-0.497px;left:20px;top:197.80px;width:165px;overflow:hidden;color:#000">VeriSign Class 3 Public Primary ...</div>
<div class="t" style="letter-spacing:-0.524px;left:188px;top:197.80px;width:180px;overflow:hidden;color:#000">VeriSign Class 3 Public Primary Ce...</div>
<div class="t" style="letter-spacing:-0.436px;left:370px;top:197.80px;width:90px;overflow:hidden;color:#000">7/17/2036</div>
<div class="t" style="letter-spacing:-0.153px;left:461px;top:197.80px;width:110px;overflow:hidden;color:#000">Client Authenticati...</div>
<div class="t" style="letter-spacing:-0.436px;left:575px;top:197.80px;width:190px;overflow:hidden;color:#000">VeriSign</div>
<div class="a" style="left:4px;top:216.00px"><svg class="ic" width="16" height="16" viewBox="0 0 16 16"><rect x="0.7" y="0.7" width="14" height="9.6" fill="#f6f7fb" stroke="#a8916b" stroke-width="1.3"/><rect x="3" y="2.6" width="9" height="0.9" fill="#7a93d0"/><rect x="5" y="4.5" width="5" height="0.6" fill="#c5cde6"/><rect x="2.6" y="6.4" width="2.6" height="1.2" fill="#b3c0e2"/><path d="M8.2 10l-0.7 2.8 1.2-0.6 0.6 0.9 0.4-3z M11.2 10l0.7 2.8-1.2-0.6-0.6 0.9-0.4-3z" fill="#2566d8"/><circle cx="9.7" cy="8.5" r="2.1" fill="#f2b31e" stroke="#c68a0c" stroke-width="0.6"/></svg></div>
<div class="t" style="letter-spacing:-0.415px;left:20px;top:215.10px;width:165px;overflow:hidden;color:#000">VeriSign Universal Root Certific...</div>
<div class="t" style="letter-spacing:-0.386px;left:188px;top:215.10px;width:180px;overflow:hidden;color:#000">VeriSign Universal Root Certificati...</div>
<div class="t" style="letter-spacing:-0.436px;left:370px;top:215.10px;width:90px;overflow:hidden;color:#000">12/2/2037</div>
<div class="t" style="letter-spacing:-0.153px;left:461px;top:215.10px;width:110px;overflow:hidden;color:#000">Client Authenticati...</div>
<div class="t" style="letter-spacing:-0.353px;left:575px;top:215.10px;width:190px;overflow:hidden;color:#000">VeriSign Universal Root Certificatio...</div>
<div class="a" style="left:4px;top:233.30px"><svg class="ic" width="16" height="16" viewBox="0 0 16 16"><rect x="0.7" y="0.7" width="14" height="9.6" fill="#f6f7fb" stroke="#a8916b" stroke-width="1.3"/><rect x="3" y="2.6" width="9" height="0.9" fill="#7a93d0"/><rect x="5" y="4.5" width="5" height="0.6" fill="#c5cde6"/><rect x="2.6" y="6.4" width="2.6" height="1.2" fill="#b3c0e2"/><path d="M8.2 10l-0.7 2.8 1.2-0.6 0.6 0.9 0.4-3z M11.2 10l0.7 2.8-1.2-0.6-0.6 0.9-0.4-3z" fill="#2566d8"/><circle cx="9.7" cy="8.5" r="2.1" fill="#f2b31e" stroke="#c68a0c" stroke-width="0.6"/></svg></div>
<div class="t" style="letter-spacing:-0.802px;left:20px;top:232.40px;width:165px;overflow:hidden;color:#000">VM118159032</div>
<div class="t" style="letter-spacing:-0.155px;left:188px;top:232.40px;width:180px;overflow:hidden;color:#000">MyQ Certificate Authority</div>
<div class="t" style="letter-spacing:-0.436px;left:370px;top:232.40px;width:90px;overflow:hidden;color:#000">2/20/2027</div>
<div class="t" style="letter-spacing:-0.153px;left:461px;top:232.40px;width:110px;overflow:hidden;color:#000">Client Authenticati...</div>
<div class="t" style="letter-spacing:0.170px;left:575px;top:232.40px;width:190px;overflow:hidden;color:#000">&lt;None&gt;</div>
<div class="a" style="left:19px;top:248px;width:749px;height:17px;background:#0078d7"></div>
<div class="a" style="left:4px;top:250.60px"><svg class="ic" style="overflow:visible" width="16" height="16" viewBox="0 0 16 16"><defs><pattern id="dith" width="2" height="2" patternUnits="userSpaceOnUse"><rect width="2" height="2" fill="#8fbbe6"/><rect width="1" height="1" fill="#d6e8f8"/><rect x="1" y="1" width="1" height="1" fill="#5d95d0"/></pattern></defs><rect x="2.2" y="0.9" width="12.5" height="9.2" fill="url(#dith)" stroke="#4f7fb8" stroke-width="0.8"/><circle cx="3.3" cy="0.9" r="2.7" fill="#4a7cb8" stroke="#24508a" stroke-width="0.8"/><circle cx="3.3" cy="0.9" r="1" fill="#c8d8a0"/><path d="M8.5 10.2l-0.7 2.6 1.2-0.6 0.6 0.9 0.4-2.9z M11.4 10.2l0.7 2.6-1.2-0.6-0.6 0.9-0.4-2.9z" fill="#2566d8"/><circle cx="10" cy="8.7" r="2" fill="#7aa070" stroke="#3f6a4a" stroke-width="0.6"/></svg></div>
<div class="t" style="letter-spacing:-0.879px;left:20px;top:249.70px;width:165px;overflow:hidden;color:#fff">VM163366583</div>
<div class="t" style="letter-spacing:-0.879px;left:188px;top:249.70px;width:180px;overflow:hidden;color:#fff">VM163366583</div>
<div class="t" style="letter-spacing:-0.436px;left:370px;top:249.70px;width:90px;overflow:hidden;color:#fff">2/19/2035</div>
<div class="t" style="letter-spacing:-0.356px;left:461px;top:249.70px;width:110px;overflow:hidden;color:#fff">Server Authenticati...</div>
<div class="t" style="letter-spacing:-0.400px;left:575px;top:249.70px;width:190px;overflow:hidden;color:#fff">ScannerVision Web Server</div>
<div class="a" style="left:4px;top:267.90px"><svg class="ic" width="16" height="16" viewBox="0 0 16 16"><rect x="0.7" y="0.7" width="14" height="9.6" fill="#f6f7fb" stroke="#a8916b" stroke-width="1.3"/><rect x="3" y="2.6" width="9" height="0.9" fill="#7a93d0"/><rect x="5" y="4.5" width="5" height="0.6" fill="#c5cde6"/><rect x="2.6" y="6.4" width="2.6" height="1.2" fill="#b3c0e2"/><path d="M8.2 10l-0.7 2.8 1.2-0.6 0.6 0.9 0.4-3z M11.2 10l0.7 2.8-1.2-0.6-0.6 0.9-0.4-3z" fill="#2566d8"/><circle cx="9.7" cy="8.5" r="2.1" fill="#f2b31e" stroke="#c68a0c" stroke-width="0.6"/></svg></div>
<div class="t" style="letter-spacing:-0.669px;left:20px;top:267.00px;width:165px;overflow:hidden;color:#000">W2022-02</div>
<div class="t" style="letter-spacing:-0.155px;left:188px;top:267.00px;width:180px;overflow:hidden;color:#000">MyQ Certificate Authority</div>
<div class="t" style="letter-spacing:-0.389px;left:370px;top:267.00px;width:90px;overflow:hidden;color:#000">6/3/2027</div>
<div class="t" style="letter-spacing:-0.153px;left:461px;top:267.00px;width:110px;overflow:hidden;color:#000">Client Authenticati...</div>
<div class="t" style="letter-spacing:0.170px;left:575px;top:267.00px;width:190px;overflow:hidden;color:#000">&lt;None&gt;</div>
<div class="a" style="left:4px;top:285.20px"><svg class="ic" width="16" height="16" viewBox="0 0 16 16"><rect x="0.7" y="0.7" width="14" height="9.6" fill="#f6f7fb" stroke="#a8916b" stroke-width="1.3"/><rect x="3" y="2.6" width="9" height="0.9" fill="#7a93d0"/><rect x="5" y="4.5" width="5" height="0.6" fill="#c5cde6"/><rect x="2.6" y="6.4" width="2.6" height="1.2" fill="#b3c0e2"/><path d="M8.2 10l-0.7 2.8 1.2-0.6 0.6 0.9 0.4-3z M11.2 10l0.7 2.8-1.2-0.6-0.6 0.9-0.4-3z" fill="#2566d8"/><circle cx="9.7" cy="8.5" r="2.1" fill="#f2b31e" stroke="#c68a0c" stroke-width="0.6"/></svg></div>
<div class="t" style="letter-spacing:-0.940px;left:20px;top:284.30px;width:165px;overflow:hidden;color:#000">WIN-OLCGU8KSE5B</div>
<div class="t" style="letter-spacing:-0.155px;left:188px;top:284.30px;width:180px;overflow:hidden;color:#000">MyQ Certificate Authority</div>
<div class="t" style="letter-spacing:-0.389px;left:370px;top:284.30px;width:90px;overflow:hidden;color:#000">6/3/2027</div>
<div class="t" style="letter-spacing:-0.153px;left:461px;top:284.30px;width:110px;overflow:hidden;color:#000">Client Authenticati...</div>
<div class="t" style="letter-spacing:0.170px;left:575px;top:284.30px;width:190px;overflow:hidden;color:#000">&lt;None&gt;</div>
<div class="sb" style="left:768px;top:0px;width:16px;height:306px"></div>
<div class="th" style="left:768.5px;top:184px;width:14px;height:83px"></div>
<svg class="ic" style="left:772px;top:6px" width="8" height="7" viewBox="0 0 8 7"><path d="M0.8 5.6L4 2.2 7.2 5.6" fill="none" stroke="#505050" stroke-width="1.9"/></svg>
<svg class="ic" style="left:772px;top:278px" width="8" height="7" viewBox="0 0 8 7"><path d="M0.8 1.4L4 4.8 7.2 1.4" fill="none" stroke="#505050" stroke-width="1.9"/></svg>
<div class="sb" style="left:0px;top:290px;width:784px;height:16px"></div>
<div class="th" style="left:17px;top:290.5px;width:628px;height:13px"></div>
<svg class="ic" style="left:4px;top:294px" width="7" height="8" viewBox="0 0 7 8"><path d="M5.6 0.8L2.2 4 5.6 7.2" fill="none" stroke="#505050" stroke-width="1.9"/></svg>
<svg class="ic" style="left:757px;top:294px" width="7" height="8" viewBox="0 0 7 8"><path d="M1.4 0.8L4.8 4 1.4 7.2" fill="none" stroke="#505050" stroke-width="1.9"/></svg>
</div>
<div class="t" style="left:4px;top:388px;letter-spacing:-0.362px">Export a certificate</div>
<div class="a" style="left:772px;top:386px;width:1px;height:17px;background:#d7d7d7"></div>
<div class="a" style="left:894px;top:386px;width:1px;height:17px;background:#d7d7d7"></div>
<div class="a" style="left:419px;top:334px;width:130px;height:110px;background:#f2f2f2;border:1px solid #cccccc;box-shadow:1px 1px 2px rgba(0,0,0,.25)"></div>
<div class="a" style="left:447px;top:335px;width:1px;height:100px;background:#e6e6e6"></div>
<div class="a" style="left:447px;top:359px;width:98px;height:1px;background:#d7d7d7"></div>
<div class="a" style="left:421px;top:363px;width:123px;height:20px;background:#91c9f7"></div>
<div class="a" style="left:447px;top:385px;width:98px;height:1px;background:#d7d7d7"></div>
<div class="t" style="left:451px;top:339px;letter-spacing:-0.649px"><span class="u">O</span>pen</div>
<div class="t" style="left:451px;top:365px;letter-spacing:-0.204px">All Tas<span class="u">k</span>s</div>
<svg class="ic" style="left:533px;top:369px" width="6" height="9" viewBox="0 0 6 9"><path d="M1 1L4.5 4.5 1 8" fill="none" stroke="#333" stroke-width="1.1"/></svg>
<div class="t" style="left:451px;top:391px;letter-spacing:-0.618px">Cu<span class="u">t</span></div>
<div class="t" style="left:451px;top:411px;letter-spacing:-0.616px"><span class="u">C</span>opy</div>
<div class="a" style="left:544px;top:360px;width:120px;height:52px;background:#f2f2f2;border:1px solid #cccccc;box-shadow:1px 1px 2px rgba(0,0,0,.25)"></div>
<div class="a" style="left:571px;top:361px;width:1px;height:50px;background:#e6e6e6"></div>
<div class="a" style="left:572px;top:385px;width:89px;height:1px;background:#d7d7d7"></div>
<div class="a" style="left:546px;top:389px;width:115px;height:20px;background:#91c9f7"></div>
<div class="t" style="left:575px;top:365.5px;letter-spacing:-0.649px"><span class="u">O</span>pen</div>
<div class="t" style="left:575px;top:391.5px;letter-spacing:-0.036px"><span class="u">E</span>xport...</div>
</body></html>
